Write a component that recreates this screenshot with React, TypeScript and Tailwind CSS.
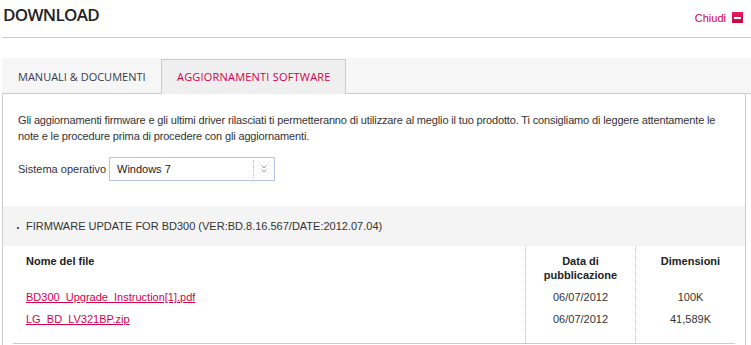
export default function App() {
  return (
    <div className="w-[751px] h-[345px] overflow-hidden bg-white font-['Liberation_Sans',Arial,sans-serif] text-[#333]">
      {/* header */}
      <div className="ml-[2px] h-[38px] border-b border-[#cccccc] flex items-start justify-between">
        <h1 className="pl-[1px] pt-[3px] text-[17px] leading-6 tracking-[-0.7px] font-semibold font-['Open_Sans',sans-serif] text-[#222]">
          DOWNLOAD
        </h1>
        <div className="flex items-center pt-[11px] pr-[8px] gap-[6px]">
          <span className="text-[11px] leading-[11px] pt-[2px] text-[#d6004c]">Chiudi</span>
          <span className="w-[11px] h-[11px] bg-linear-to-b from-[#ea1d63] to-[#c3063f] flex items-center justify-center">
            <span className="w-[7px] h-[2px] bg-white" />
          </span>
        </div>
      </div>

      {/* tabs */}
      <div className="mt-[20px] ml-[2px] w-[749px] h-[36px] bg-[#f6f6f6] border-b border-[#cccccc] flex items-start font-['Open_Sans',sans-serif] text-[11px] leading-4">
        <div className="w-[159px] pl-[16px] pt-[11px] text-[#3a3a4a]">MANUALI &amp; DOCUMENTI</div>
        <div className="mt-[1px] w-[185px] h-[35px] bg-[#efefef] border-t border-l border-r border-[#cccccc] pl-[15px] pt-[9px] text-[#d6004c] tracking-[0.2px]">
          AGGIORNAMENTI SOFTWARE
        </div>
      </div>

      {/* content */}
      <div className="ml-[2px] w-[744px] h-[260px] border-l border-r border-[#cccccc]">
        <p className="pl-[15px] pr-[12px] pt-[18px] text-[11px] leading-4 tracking-[-0.15px]">
          Gli aggiornamenti firmware e gli ultimi driver rilasciati ti permetteranno di utilizzare al meglio il tuo prodotto. Ti consigliamo di leggere attentamente le note e le procedure prima di procedere con gli aggiornamenti.
        </p>

        <div className="mt-[13px] pl-[15px] flex items-center text-[11px]">
          <span className="w-[91px]">Sistema operativo</span>
          <div className="w-[166px] h-[24px] border border-[#b3c6de] flex items-center">
            <span className="flex-1 pl-[7px] text-[11px] text-[#222]">Windows 7</span>
            <span className="h-[18px] border-l border-dotted border-[#b8b8b8]" />
            <span className="w-[20px] flex items-center justify-center">
              <svg width="6" height="8" viewBox="0 0 6 8" fill="none" stroke="#9a9a9a" strokeWidth="1">
                <path d="M0.5 0.5 L3 3 L5.5 0.5" />
                <path d="M0.5 4.5 L3 7 L5.5 4.5" />
              </svg>
            </span>
          </div>
        </div>

        <div className="mt-[25px] h-[40px] bg-[#f4f4f4] flex items-center pl-[14px] pt-[1px] text-[11px]">
          <span className="w-[2px] h-[2px] bg-[#555] mr-[7px] mt-[3px]" />
          <span>FIRMWARE UPDATE FOR BD300 (VER:BD.8.16.567/DATE:2012.07.04)</span>
        </div>

        <div className="ml-[10px] w-[722px] border-b border-[#cccccc] grid grid-cols-[512px_110px_100px] text-[11px]">
          <div className="flex flex-col pl-[13px] pb-[13px]">
            <div className="h-[40px] pt-[8px] leading-[14px] font-bold text-[#222]">Nome del file</div>
            <div className="h-[22px] leading-[22px]">
              <a href="#" className="text-[#d6004c] underline">BD300_Upgrade_Instruction[1].pdf</a>
            </div>
            <div className="h-[22px] leading-[22px]">
              <a href="#" className="text-[#d6004c] underline">LG_BD_LV321BP.zip</a>
            </div>
          </div>
          <div className="flex flex-col pb-[13px] border-l border-dotted border-[#bbbbbb] text-center">
            <div className="h-[40px] pt-[8px] leading-[14px] font-bold text-[#222]">
              Data di
              <br />
              pubblicazione
            </div>
            <div className="h-[22px] leading-[22px]">06/07/2012</div>
            <div className="h-[22px] leading-[22px]">06/07/2012</div>
          </div>
          <div className="flex flex-col pb-[13px] pl-[10px] border-l border-dotted border-[#bbbbbb] text-center">
            <div className="h-[40px] pt-[8px] leading-[14px] font-bold text-[#222]">Dimensioni</div>
            <div className="h-[22px] leading-[22px]">100K</div>
            <div className="h-[22px] leading-[22px]">41,589K</div>
          </div>
        </div>
      </div>
    </div>
  );
}
